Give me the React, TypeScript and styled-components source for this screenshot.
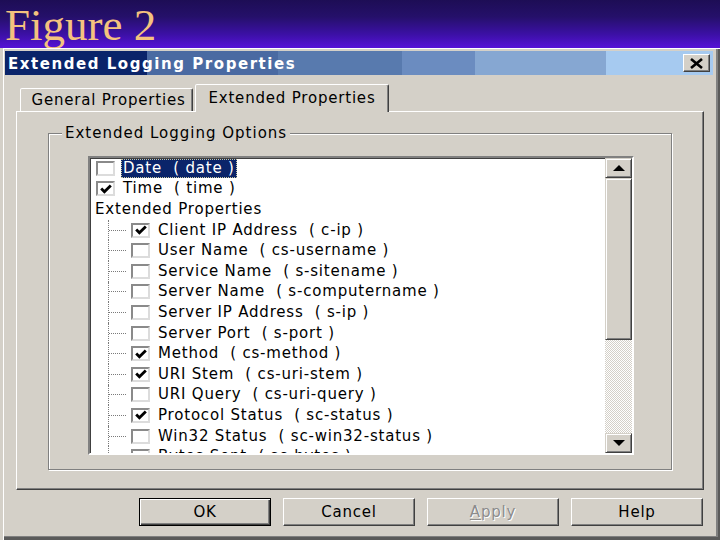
import React from "react";
import styled, { createGlobalStyle, css } from "styled-components";

const GlobalStyle = createGlobalStyle`
  html, body { margin: 0; padding: 0; }
  body { width: 720px; height: 540px; overflow: hidden; background: #d4d0c8; }
`;

const UI = `"DejaVu Sans", Verdana, sans-serif`;

const Page = styled.div`
  width: 720px;
  height: 540px;
  display: flex;
  flex-direction: column;
`;

const Header = styled.header`
  flex: none;
  height: 48px;
  background: linear-gradient(180deg, #1d0d55 0%, #25106a 35%, #3c10a6 72%, #5612d8 100%);
`;

const FigureTitle = styled.h1`
  margin: 0 0 0 5px;
  font-family: "Liberation Serif", "Times New Roman", serif;
  font-weight: normal;
  font-size: 45px;
  line-height: 50px;
  color: #f4c27e;
`;

const Dialog = styled.section`
  flex: none;
  height: 492px;
  box-sizing: border-box;
  background: #d4d0c8;
  display: flex;
  flex-direction: column;
  box-shadow: inset 3px 0 0 #d4d0c8, inset 4px 1px 0 #ffffff, inset -2px -3px 0 #5a5a5a,
    inset -4px -4px 0 #808080;
  font-family: ${UI};
  font-size: 15px;
  letter-spacing: 0.8px;
  color: #000;
`;

const TitleBar = styled.div`
  height: 24px;
  margin: 3px 7px 0 5px;
  padding: 0 3px;
  display: flex;
  align-items: center;
  justify-content: space-between;
  background: linear-gradient(
    90deg,
    #0a246a 0 142px,
    #4a6aa2 142px 273px,
    #587aae 273px 397px,
    #6b8cc0 397px 470px,
    #86a7d2 470px 601px,
    #a6caf0 601px
  );
`;

const TitleText = styled.span`
  color: #fff;
  font-weight: bold;
  font-size: 15px;
  letter-spacing: 1.55px;
  white-space: nowrap;
  padding-top: 1px;
`;

const CloseButton = styled.div`
  box-sizing: border-box;
  width: 27px;
  height: 18px;
  background: #d4d0c8;
  border: 1px solid;
  border-color: #ffffff #404040 #404040 #ffffff;
  box-shadow: inset -1px -1px 0 #808080;
  display: flex;
  align-items: center;
  justify-content: center;
`;

const TabStrip = styled.div`
  position: relative;
  z-index: 1;
  height: 27px;
  margin: 9px 0 0 20px;
  display: flex;
  align-items: flex-end;
`;

const Tab = styled.div<{ $active?: boolean }>`
  box-sizing: border-box;
  display: flex;
  align-items: center;
  justify-content: center;
  white-space: nowrap;
  background: #d4d0c8;
  border: 1px solid;
  border-bottom: none;
  border-color: #ffffff #404040 transparent #ffffff;
  box-shadow: inset -1px 0 0 #808080;
  border-radius: 2px 2px 0 0;
  width: 173px;
  height: 23px;
  padding-left: 4px;
  ${(p) =>
    p.$active &&
    css`
      width: 194px;
      height: 28px;
      margin-left: 2px;
      margin-bottom: -1px;
      padding: 0 0 2px 0;
    `}
`;

const Panel = styled.div`
  box-sizing: border-box;
  width: 688px;
  height: 379px;
  margin-left: 16px;
  border: 1px solid;
  border-color: #ffffff #404040 #404040 #ffffff;
  box-shadow: inset -1px -1px 0 #808080;
  display: flex;
  flex-direction: column;
`;

const GroupBox = styled.div`
  box-sizing: border-box;
  height: 337px;
  margin: 21px 31px 0 31px;
  border: 1px solid #808080;
  box-shadow: 1px 1px 0 #ffffff, inset 1px 1px 0 #ffffff;
  display: flex;
  flex-direction: column;
`;

const Legend = styled.div`
  align-self: flex-start;
  height: 18px;
  line-height: 18px;
  margin: -10px 0 0 13px;
  padding: 0 3px;
  background: #d4d0c8;
  white-space: nowrap;
  letter-spacing: 1px;
`;

const ListBox = styled.div`
  box-sizing: border-box;
  width: 546px;
  height: 299px;
  margin: 14px 0 0 39px;
  border: 2px solid;
  border-color: #808080 #ffffff #ffffff #808080;
  background: #fff;
  display: flex;
  overflow: hidden;
`;

const List = styled.div`
  flex: 1;
  display: flex;
  flex-direction: column;
  overflow: hidden;
  box-shadow: inset 1px 1px 0 #404040;
`;

const Row = styled.div<{ $indent: number }>`
  flex: none;
  height: 20.6px;
  display: flex;
  align-items: center;
  padding-left: ${(p) => p.$indent}px;
  white-space: pre;
`;

const Connector = styled.span`
  align-self: stretch;
  width: 17px;
  margin-right: 5px;
  border-left: 1px dotted #7a7a7a;
  display: flex;
  align-items: center;
`;

const Dash = styled.span`
  flex: 1;
  border-top: 1px dotted #7a7a7a;
`;

const CheckBox = styled.span`
  box-sizing: border-box;
  flex: none;
  width: 19px;
  height: 15px;
  margin-right: 6px;
  border: 2px solid;
  border-color: #8a8a8a #dcdcdc #dcdcdc #8a8a8a;
  background: #fff;
  display: flex;
  align-items: center;
  justify-content: center;
`;

const ItemText = styled.span<{ $selected?: boolean }>`
  height: 19px;
  line-height: 19px;
  padding: 0 2px;
  ${(p) =>
    p.$selected &&
    css`
      background: #0a246a;
      color: #fff;
      outline: 1px dotted #c8c8a0;
      outline-offset: -1px;
    `}
`;

const GroupTitle = styled.span`
  height: 19px;
  line-height: 19px;
`;

const ScrollBar = styled.div`
  flex: none;
  width: 27px;
  display: flex;
  flex-direction: column;
  background: repeating-conic-gradient(#d4d0c8 0 25%, #ffffff 0 50%) 0 0 / 2px 2px;
`;

const ScrollPart = styled.div<{ $size: number }>`
  box-sizing: border-box;
  flex: none;
  height: ${(p) => p.$size}px;
  background: #d4d0c8;
  border: 1px solid;
  border-color: #d4d0c8 #404040 #404040 #d4d0c8;
  box-shadow: inset 1px 1px 0 #ffffff, inset -1px -1px 0 #808080;
  display: flex;
  align-items: center;
  justify-content: center;
`;

const Track = styled.div`
  flex: 1;
`;

const ButtonRow = styled.div`
  box-sizing: border-box;
  width: 688px;
  margin: 8px 0 0 16px;
  padding-right: 1px;
  display: flex;
  justify-content: flex-end;
  gap: 12px;
`;

const Button = styled.button<{ $default?: boolean }>`
  box-sizing: border-box;
  width: 132px;
  height: 28px;
  padding: 0;
  background: #d4d0c8;
  font-family: ${UI};
  font-size: 15px;
  letter-spacing: 0.8px;
  color: #000;
  border: 1px solid;
  border-color: #ffffff #404040 #404040 #ffffff;
  box-shadow: inset -1px -1px 0 #808080;
  ${(p) =>
    p.$default &&
    css`
      border-color: #000;
      box-shadow: inset 1px 1px 0 #ffffff, inset -1px -1px 0 #404040, inset -2px -2px 0 #808080;
    `}
  &:disabled {
    color: #8c8c8c;
    text-shadow: 1px 1px 0 #ffffff;
  }
  u {
    text-decoration-thickness: 1px;
    text-underline-offset: 2px;
  }
`;

const Tick = () => (
  <svg width="12" height="10" viewBox="0 0 12 10">
    <path d="M1.2 4.6 L4.4 7.8 L10.8 1.4" fill="none" stroke="#000" strokeWidth="2.8" />
  </svg>
);

const CloseX = () => (
  <svg width="15" height="11" viewBox="0 0 15 11">
    <path d="M2 1 L13 10 M13 1 L2 10" stroke="#000" strokeWidth="2.6" />
  </svg>
);

const Arrow = ({ down }: { down?: boolean }) => (
  <svg width="12" height="6" viewBox="0 0 12 6">
    <polygon points={down ? "0,0 12,0 6,6" : "0,6 12,6 6,0"} fill="#000" />
  </svg>
);

type Item = { label: string; checked: boolean };

const top: (Item & { selected?: boolean })[] = [
  { label: "Date  ( date )", checked: false, selected: true },
  { label: "Time  ( time )", checked: true },
];

const extended: Item[] = [
  { label: "Client IP Address  ( c-ip )", checked: true },
  { label: "User Name  ( cs-username )", checked: false },
  { label: "Service Name  ( s-sitename )", checked: false },
  { label: "Server Name  ( s-computername )", checked: false },
  { label: "Server IP Address  ( s-ip )", checked: false },
  { label: "Server Port  ( s-port )", checked: false },
  { label: "Method  ( cs-method )", checked: true },
  { label: "URI Stem  ( cs-uri-stem )", checked: true },
  { label: "URI Query  ( cs-uri-query )", checked: false },
  { label: "Protocol Status  ( sc-status )", checked: true },
  { label: "Win32 Status  ( sc-win32-status )", checked: false },
  { label: "Bytes Sent  ( sc-bytes )", checked: false },
];

export default function App() {
  return (
    <Page>
      <GlobalStyle />
      <Header>
        <FigureTitle>Figure 2</FigureTitle>
      </Header>
      <Dialog>
        <TitleBar>
          <TitleText>Extended Logging Properties</TitleText>
          <CloseButton>
            <CloseX />
          </CloseButton>
        </TitleBar>
        <TabStrip>
          <Tab>General Properties</Tab>
          <Tab $active>Extended Properties</Tab>
        </TabStrip>
        <Panel>
          <GroupBox>
            <Legend>Extended Logging Options</Legend>
            <ListBox>
              <List>
                {top.map((it) => (
                  <Row key={it.label} $indent={6}>
                    <CheckBox>{it.checked && <Tick />}</CheckBox>
                    <ItemText $selected={it.selected}>{it.label}</ItemText>
                  </Row>
                ))}
                <Row $indent={5}>
                  <GroupTitle>Extended Properties</GroupTitle>
                </Row>
                {extended.map((it) => (
                  <Row key={it.label} $indent={18}>
                    <Connector>
                      <Dash />
                    </Connector>
                    <CheckBox>{it.checked && <Tick />}</CheckBox>
                    <ItemText>{it.label}</ItemText>
                  </Row>
                ))}
              </List>
              <ScrollBar>
                <ScrollPart $size={20}>
                  <Arrow />
                </ScrollPart>
                <ScrollPart $size={162} />
                <Track />
                <ScrollPart $size={20}>
                  <Arrow down />
                </ScrollPart>
              </ScrollBar>
            </ListBox>
          </GroupBox>
        </Panel>
        <ButtonRow>
          <Button $default>OK</Button>
          <Button>Cancel</Button>
          <Button disabled>
            <u>A</u>pply
          </Button>
          <Button>Help</Button>
        </ButtonRow>
      </Dialog>
    </Page>
  );
}
